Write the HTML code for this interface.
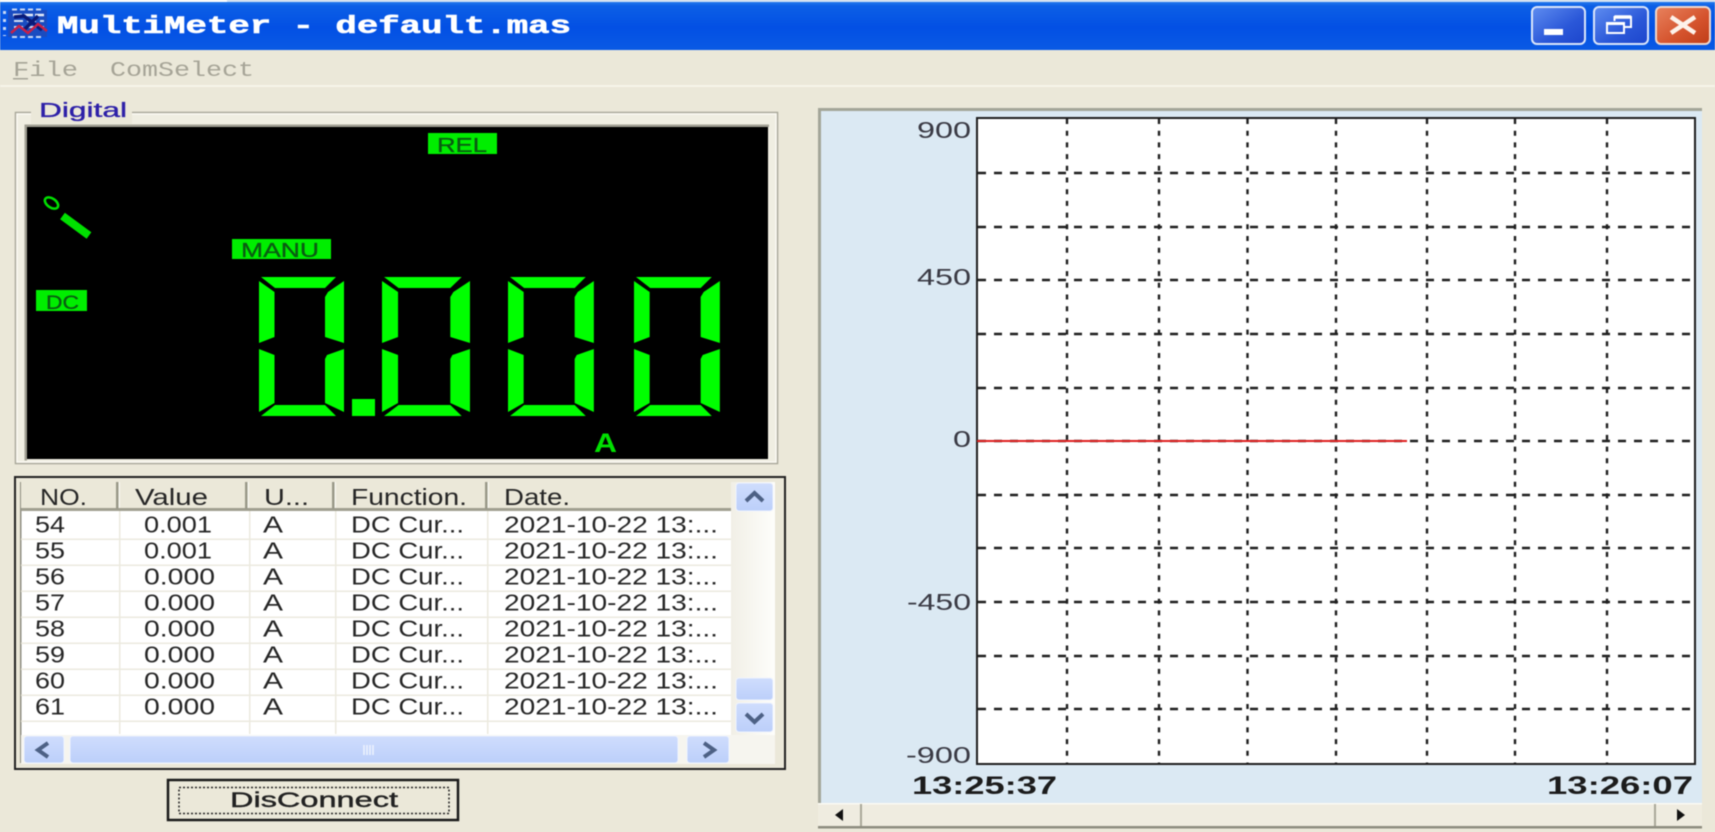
<!DOCTYPE html>
<html lang="en">
<head>
<meta charset="utf-8">
<title>MultiMeter - default.mas</title>
<style>
html,body{margin:0;padding:0;width:1715px;height:832px;overflow:hidden;background:#ebe8d9}
svg{display:block;filter:blur(.5px)}
text{font-family:"Liberation Sans",sans-serif;white-space:pre}
.c{font-size:23.5px;fill:#262626}
.m{font-family:"Liberation Mono",monospace}
</style>
</head>
<body>
<svg xmlns="http://www.w3.org/2000/svg" width="1715" height="832" viewBox="0 0 1715 832">
<defs>
<linearGradient id="tb" x1="0" y1="0" x2="0" y2="1">
<stop offset="0" stop-color="#2f86ee"/><stop offset=".12" stop-color="#0c5fe6"/><stop offset=".55" stop-color="#0350e4"/><stop offset="1" stop-color="#0a5ae4"/>
</linearGradient>
<linearGradient id="wb" x1="0" y1="0" x2="1" y2="1">
<stop offset="0" stop-color="#5f8df0"/><stop offset=".6" stop-color="#2a57d8"/><stop offset="1" stop-color="#1c45cc"/>
</linearGradient>
<linearGradient id="cb" x1="0" y1="0" x2="1" y2="1">
<stop offset="0" stop-color="#e8825e"/><stop offset=".6" stop-color="#d4522c"/><stop offset="1" stop-color="#bf3d18"/>
</linearGradient>
<linearGradient id="vt" x1="0" y1="0" x2="1" y2="0">
<stop offset="0" stop-color="#f1efe6"/><stop offset="1" stop-color="#fefefb"/>
</linearGradient>
<linearGradient id="sb" x1="0" y1="0" x2="0" y2="1">
<stop offset="0" stop-color="#cfddfd"/><stop offset="1" stop-color="#bccffa"/>
</linearGradient>
</defs>

<rect width="1715" height="832" fill="#ebe8d9"/>

<!-- title bar -->
<rect x="0" y="0" width="1715" height="50" fill="url(#tb)"/>
<rect x="0" y="0" width="1715" height="2" fill="#cfe0f4"/>
<rect x="0" y="0" width="227" height="2" fill="#ffffff"/>
<!-- app icon -->
<g>
<rect x="8" y="10" width="39" height="27" fill="#1a4cc0"/>
<path d="M12 9.500H44M12 37H44" stroke="#c8d8f4" stroke-width="2" stroke-dasharray="5 3"/>
<path d="M4.500 11V36" stroke="#c8d8f4" stroke-width="3" stroke-dasharray="3 5"/>
<path d="M13 15H46" stroke="#e6ecf8" stroke-width="2.500" stroke-dasharray="9 2"/>
<path d="M14 21H44M14 27H44" stroke="#d4def2" stroke-width="2" stroke-dasharray="9 4"/>
<path d="M14 17L24 16L42 30M38 16L24 30" fill="none" stroke="#0a1a78" stroke-width="3.500"/>
<path d="M11 33L19 26L28 33L38 24L47 31" fill="none" stroke="#c82048" stroke-width="2.500"/>
</g>
<text class="m" x="57" y="33" font-size="25" font-weight="700" fill="#ffffff" stroke="#ffffff" stroke-width=".6" textLength="514" lengthAdjust="spacingAndGlyphs">MultiMeter - default.mas</text>

<!-- window buttons -->
<rect x="1532" y="7" width="53" height="37" rx="5" fill="url(#wb)" stroke="#dbe6fa" stroke-width="2"/>
<rect x="1544" y="29" width="19" height="6" fill="#ffffff"/>
<rect x="1594" y="7" width="54" height="37" rx="5" fill="url(#wb)" stroke="#dbe6fa" stroke-width="2"/>
<path d="M1614.500 21V17H1631V27H1624" fill="none" stroke="#ffffff" stroke-width="2"/>
<rect x="1607" y="23" width="17" height="10" fill="none" stroke="#ffffff" stroke-width="2"/>
<path d="M1614.500 17H1631" stroke="#ffffff" stroke-width="3.500"/>
<path d="M1607 23.500H1624" stroke="#ffffff" stroke-width="3"/>
<rect x="1656" y="7" width="54" height="37" rx="5" fill="url(#cb)" stroke="#f0d8cc" stroke-width="2"/>
<path d="M1671 17L1695 33M1695 17L1671 33" stroke="#fdf2ea" stroke-width="4.500"/>

<!-- menu -->
<text class="m" x="13" y="76" font-size="21" fill="#a6a497" textLength="65" lengthAdjust="spacingAndGlyphs">File</text>
<rect x="13" y="78" width="15" height="1.500" fill="#a6a497"/>
<text class="m" x="110" y="76" font-size="21" fill="#a6a497" textLength="144" lengthAdjust="spacingAndGlyphs">ComSelect</text>
<rect x="0" y="85" width="1715" height="2" fill="#f6f4e9"/>

<!-- digital group -->
<rect x="15.500" y="112.500" width="762" height="351" fill="#f0eee2" stroke="#a8a699" stroke-width="1.500"/>
<rect x="17" y="114" width="759" height="348" fill="none" stroke="#fbfaf3" stroke-width="1.500"/>
<rect x="31" y="100" width="101" height="24" fill="#ebe8d9"/>
<text x="39" y="117" font-size="20" fill="#2d20a8" stroke="#2d20a8" stroke-width=".35" textLength="88" lengthAdjust="spacingAndGlyphs">Digital</text>
<rect x="25" y="124.500" width="744" height="2.500" fill="#a09f92"/>
<rect x="24.500" y="124.500" width="2.500" height="336" fill="#a09f92"/>
<rect x="27" y="127" width="741" height="332" fill="#000000"/>

<rect x="428" y="133" width="69" height="21" fill="#00ee00"/>
<text x="437" y="152" font-size="20" fill="#0a5c12" stroke="#0a5c12" stroke-width=".3" textLength="50" lengthAdjust="spacingAndGlyphs">REL</text>
<rect x="232" y="239" width="99" height="20" fill="#00ee00"/>
<text x="241" y="257" font-size="20" fill="#0a5c12" stroke="#0a5c12" stroke-width=".3" textLength="78" lengthAdjust="spacingAndGlyphs">MANU</text>
<rect x="36" y="290" width="51" height="21" fill="#00ee00"/>
<text x="46" y="309" font-size="19" fill="#0a5c12" stroke="#0a5c12" stroke-width=".3" textLength="33" lengthAdjust="spacingAndGlyphs">DC</text>

<ellipse cx="51.500" cy="203" rx="7.500" ry="4.500" transform="rotate(35 51.500 203)" fill="none" stroke="#00e000" stroke-width="2.500"/>
<path d="M62.500 216L89 235.500" stroke="#00e000" stroke-width="8" stroke-linecap="butt"/>

<!-- seven segment display -->
<text x="259" y="416" font-size="190" fill="#000000" textLength="461" lengthAdjust="spacingAndGlyphs">0.000</text>
<g fill="#00ff00" aria-label="0.000">
<g transform="translate(259 0)">
<polygon points="2,277 77,277 66,288 16,288"/><polygon points="0,281 15.500,292 15.500,337 0,343"/><polygon points="0,349 15.500,355 15.500,403 0,412"/><polygon points="2,416 77,416 66,405 16,405"/><polygon points="85,281 69,292 66,297 66,337 85,343"/><polygon points="85,349 68,355 66,359 66,403 85,412"/>
</g>
<g transform="translate(382 0) scale(1.035 1)">
<polygon points="2,277 77,277 66,288 16,288"/><polygon points="0,281 15.500,292 15.500,337 0,343"/><polygon points="0,349 15.500,355 15.500,403 0,412"/><polygon points="2,416 77,416 66,405 16,405"/><polygon points="85,281 69,292 66,297 66,337 85,343"/><polygon points="85,349 68,355 66,359 66,403 85,412"/>
</g>
<g transform="translate(508 0) scale(1.01 1)">
<polygon points="2,277 77,277 66,288 16,288"/><polygon points="0,281 15.500,292 15.500,337 0,343"/><polygon points="0,349 15.500,355 15.500,403 0,412"/><polygon points="2,416 77,416 66,405 16,405"/><polygon points="85,281 69,292 66,297 66,337 85,343"/><polygon points="85,349 68,355 66,359 66,403 85,412"/>
</g>
<g transform="translate(634 0) scale(1.01 1)">
<polygon points="2,277 77,277 66,288 16,288"/><polygon points="0,281 15.500,292 15.500,337 0,343"/><polygon points="0,349 15.500,355 15.500,403 0,412"/><polygon points="2,416 77,416 66,405 16,405"/><polygon points="85,281 69,292 66,297 66,337 85,343"/><polygon points="85,349 68,355 66,359 66,403 85,412"/>
</g>
<rect x="352" y="399" width="23" height="17"/>
</g>
<text x="594" y="452" font-size="27" font-weight="700" fill="#00e000" textLength="23" lengthAdjust="spacingAndGlyphs">A</text>

<!-- table -->
<rect x="15" y="477" width="770" height="292" fill="#ebe8d9" stroke="#222" stroke-width="2"/>
<rect x="21" y="482" width="754" height="281" fill="#ffffff"/>
<rect x="20" y="482" width="1.500" height="281" fill="#8e8d80"/>
<rect x="21" y="482" width="710" height="29" fill="#ebe8d9"/>
<rect x="21" y="508" width="710" height="3" fill="#a09f90"/>
<g fill="#9a9989">
<rect x="116" y="482" width="2.500" height="27"/><rect x="245" y="482" width="2.500" height="27"/><rect x="332" y="482" width="2.500" height="27"/><rect x="485" y="482" width="2.500" height="27"/>
</g>
<g fill="#f7f6ee">
<rect x="118.500" y="482" width="1.500" height="26"/><rect x="247.500" y="482" width="1.500" height="26"/><rect x="334.500" y="482" width="1.500" height="26"/><rect x="487.500" y="482" width="1.500" height="26"/>
</g>
<g>
<text class="c" x="40" y="505" textLength="47" lengthAdjust="spacingAndGlyphs">NO.</text>
<text class="c" x="135" y="505" textLength="73" lengthAdjust="spacingAndGlyphs">Value</text>
<text class="c" x="264" y="505" textLength="45" lengthAdjust="spacingAndGlyphs">U...</text>
<text class="c" x="351" y="505" textLength="116" lengthAdjust="spacingAndGlyphs">Function.</text>
<text class="c" x="504" y="505" textLength="66" lengthAdjust="spacingAndGlyphs">Date.</text>
</g>
<g fill="#eceadf">
<rect x="21" y="538.500" width="710" height="1.500"/><rect x="21" y="564.500" width="710" height="1.500"/><rect x="21" y="590.500" width="710" height="1.500"/><rect x="21" y="616.500" width="710" height="1.500"/><rect x="21" y="642.500" width="710" height="1.500"/><rect x="21" y="668.500" width="710" height="1.500"/><rect x="21" y="694.500" width="710" height="1.500"/><rect x="21" y="720.500" width="710" height="1.500"/>
<rect x="119" y="511" width="1.500" height="223"/><rect x="249" y="511" width="1.500" height="223"/><rect x="335" y="511" width="1.500" height="223"/><rect x="487" y="511" width="1.500" height="223"/>
</g>
<g transform="translate(0 .5)">
<text class="c" x="35" y="532" textLength="30" lengthAdjust="spacingAndGlyphs">54</text><text class="c" x="144" y="532" textLength="68" lengthAdjust="spacingAndGlyphs">0.001</text><text class="c" x="263" y="532" textLength="20" lengthAdjust="spacingAndGlyphs">A</text><text class="c" x="351" y="532" textLength="113" lengthAdjust="spacingAndGlyphs">DC Cur...</text><text class="c" x="504" y="532" textLength="214" lengthAdjust="spacingAndGlyphs">2021-10-22 13:...</text>
<text class="c" x="35" y="558" textLength="30" lengthAdjust="spacingAndGlyphs">55</text><text class="c" x="144" y="558" textLength="68" lengthAdjust="spacingAndGlyphs">0.001</text><text class="c" x="263" y="558" textLength="20" lengthAdjust="spacingAndGlyphs">A</text><text class="c" x="351" y="558" textLength="113" lengthAdjust="spacingAndGlyphs">DC Cur...</text><text class="c" x="504" y="558" textLength="214" lengthAdjust="spacingAndGlyphs">2021-10-22 13:...</text>
<text class="c" x="35" y="584" textLength="30" lengthAdjust="spacingAndGlyphs">56</text><text class="c" x="144" y="584" textLength="71" lengthAdjust="spacingAndGlyphs">0.000</text><text class="c" x="263" y="584" textLength="20" lengthAdjust="spacingAndGlyphs">A</text><text class="c" x="351" y="584" textLength="113" lengthAdjust="spacingAndGlyphs">DC Cur...</text><text class="c" x="504" y="584" textLength="214" lengthAdjust="spacingAndGlyphs">2021-10-22 13:...</text>
<text class="c" x="35" y="610" textLength="30" lengthAdjust="spacingAndGlyphs">57</text><text class="c" x="144" y="610" textLength="71" lengthAdjust="spacingAndGlyphs">0.000</text><text class="c" x="263" y="610" textLength="20" lengthAdjust="spacingAndGlyphs">A</text><text class="c" x="351" y="610" textLength="113" lengthAdjust="spacingAndGlyphs">DC Cur...</text><text class="c" x="504" y="610" textLength="214" lengthAdjust="spacingAndGlyphs">2021-10-22 13:...</text>
<text class="c" x="35" y="636" textLength="30" lengthAdjust="spacingAndGlyphs">58</text><text class="c" x="144" y="636" textLength="71" lengthAdjust="spacingAndGlyphs">0.000</text><text class="c" x="263" y="636" textLength="20" lengthAdjust="spacingAndGlyphs">A</text><text class="c" x="351" y="636" textLength="113" lengthAdjust="spacingAndGlyphs">DC Cur...</text><text class="c" x="504" y="636" textLength="214" lengthAdjust="spacingAndGlyphs">2021-10-22 13:...</text>
<text class="c" x="35" y="662" textLength="30" lengthAdjust="spacingAndGlyphs">59</text><text class="c" x="144" y="662" textLength="71" lengthAdjust="spacingAndGlyphs">0.000</text><text class="c" x="263" y="662" textLength="20" lengthAdjust="spacingAndGlyphs">A</text><text class="c" x="351" y="662" textLength="113" lengthAdjust="spacingAndGlyphs">DC Cur...</text><text class="c" x="504" y="662" textLength="214" lengthAdjust="spacingAndGlyphs">2021-10-22 13:...</text>
<text class="c" x="35" y="688" textLength="30" lengthAdjust="spacingAndGlyphs">60</text><text class="c" x="144" y="688" textLength="71" lengthAdjust="spacingAndGlyphs">0.000</text><text class="c" x="263" y="688" textLength="20" lengthAdjust="spacingAndGlyphs">A</text><text class="c" x="351" y="688" textLength="113" lengthAdjust="spacingAndGlyphs">DC Cur...</text><text class="c" x="504" y="688" textLength="214" lengthAdjust="spacingAndGlyphs">2021-10-22 13:...</text>
<text class="c" x="35" y="714" textLength="30" lengthAdjust="spacingAndGlyphs">61</text><text class="c" x="144" y="714" textLength="71" lengthAdjust="spacingAndGlyphs">0.000</text><text class="c" x="263" y="714" textLength="20" lengthAdjust="spacingAndGlyphs">A</text><text class="c" x="351" y="714" textLength="113" lengthAdjust="spacingAndGlyphs">DC Cur...</text><text class="c" x="504" y="714" textLength="214" lengthAdjust="spacingAndGlyphs">2021-10-22 13:...</text>
</g>

<!-- vertical scrollbar -->
<rect x="731" y="482" width="44" height="254" fill="url(#vt)"/>
<rect x="736" y="483" width="37" height="28" rx="3" fill="url(#sb)" stroke="#f0f4fd"/>
<path d="M746 501L754.500 493L763 501" fill="none" stroke="#4d6185" stroke-width="4"/>
<rect x="736" y="678" width="37" height="22" rx="3" fill="url(#sb)" stroke="#f0f4fd"/>
<rect x="736" y="703" width="37" height="29" rx="3" fill="url(#sb)" stroke="#f0f4fd"/>
<path d="M746 714L754.500 722L763 714" fill="none" stroke="#4d6185" stroke-width="4"/>

<!-- horizontal scrollbar -->
<rect x="21" y="735" width="754" height="29" fill="#f6f5ef"/>
<rect x="24" y="736" width="40" height="27" rx="3" fill="url(#sb)" stroke="#f0f4fd"/>
<path d="M48 743L38 750L48 757" fill="none" stroke="#4d6185" stroke-width="4"/>
<rect x="70" y="736" width="608" height="27" rx="3" fill="url(#sb)" stroke="#f0f4fd"/>
<path d="M364 745V755M367 745V755M370 745V755M373 745V755" stroke="#eef3fe" stroke-width="1.500"/>
<rect x="687" y="736" width="42" height="27" rx="3" fill="url(#sb)" stroke="#f0f4fd"/>
<path d="M704 743L714 750L704 757" fill="none" stroke="#4d6185" stroke-width="4"/>

<!-- disconnect button -->
<rect x="168" y="780" width="290" height="40" fill="#ebe8d9" stroke="#1a1a1a" stroke-width="2.500"/>
<rect x="179" y="787.500" width="270" height="26" fill="none" stroke="#222" stroke-width="1.500" stroke-dasharray="2 2"/>
<text x="230" y="807" font-size="21" fill="#222" stroke="#222" stroke-width=".4" textLength="168" lengthAdjust="spacingAndGlyphs">DisConnect</text>

<!-- chart panel -->
<rect x="818" y="108" width="884" height="695" fill="#a3a598"/>
<rect x="821" y="111" width="881" height="692" fill="#dbe9f3"/>
<rect x="977" y="118" width="718" height="646" fill="#ffffff" stroke="#1e1e1e" stroke-width="2"/>
<g stroke="#1e1e1e" stroke-width="2.400" fill="none">
<path stroke-dasharray="8 8" d="M978 173H1694M978 227H1694M978 280H1694M978 334H1694M978 388H1694M978 441H1694M978 495H1694M978 548H1694M978 602H1694M978 656H1694M978 709H1694"/>
<path stroke-dasharray="5 6.700" d="M1067 119V763M1159 119V763M1247.500 119V763M1336 119V763M1427 119V763M1515 119V763M1607 119V763"/>
</g>
<rect x="977" y="440" width="430" height="2" fill="#e02020"/>
<g>
<text x="917" y="138" font-size="23" fill="#3a3a44" textLength="54" lengthAdjust="spacingAndGlyphs">900</text>
<text x="917" y="285" font-size="23" fill="#3a3a44" textLength="54" lengthAdjust="spacingAndGlyphs">450</text>
<text x="953" y="447" font-size="23" fill="#3a3a44" textLength="18" lengthAdjust="spacingAndGlyphs">0</text>
<text x="907" y="610" font-size="23" fill="#3a3a44" textLength="64" lengthAdjust="spacingAndGlyphs">-450</text>
<text x="906" y="763" font-size="23" fill="#3a3a44" textLength="65" lengthAdjust="spacingAndGlyphs">-900</text>
</g>
<text x="912" y="794" font-size="25" font-weight="700" fill="#1c1c1c" textLength="145" lengthAdjust="spacingAndGlyphs">13:25:37</text>
<text x="1547" y="794" font-size="25" font-weight="700" fill="#1c1c1c" textLength="146" lengthAdjust="spacingAndGlyphs">13:26:07</text>

<!-- chart scrollbar -->
<rect x="818" y="803" width="884" height="25" fill="#efece0"/>
<rect x="818" y="826" width="884" height="2.500" fill="#8e8d80"/>
<rect x="818" y="803" width="884" height="1.500" fill="#fbfaf3"/>
<rect x="860" y="804" width="2" height="22" fill="#a9a799"/>
<rect x="1654" y="804" width="2" height="22" fill="#a9a799"/>
<path d="M843 809V821L835 815Z" fill="#111"/>
<path d="M1677 809V821L1685 815Z" fill="#111"/>
</svg>
</body>
</html>
